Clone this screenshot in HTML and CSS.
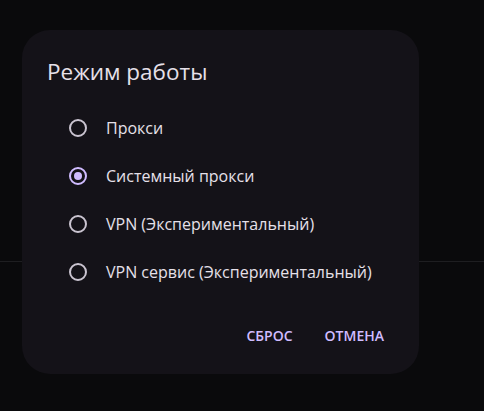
FILE: index.html
```html
<!DOCTYPE html>
<html lang="ru">
<head>
    <meta charset="UTF-8">
    <title>Режим работы</title>
    <link rel="stylesheet" href="styles.css">
</head>
<body>
    <div class="page">
        <div class="divider"></div>
    </div>

    <div class="dialog">
        <h2 class="dialog-title">Режим работы</h2>

        <div class="options">
            <label class="option">
                <span class="radio"></span>
                <span class="option-text">Прокси</span>
            </label>
            <label class="option">
                <span class="radio checked"></span>
                <span class="option-text">Системный прокси</span>
            </label>
            <label class="option">
                <span class="radio"></span>
                <span class="option-text">VPN (Экспериментальный)</span>
            </label>
            <label class="option">
                <span class="radio"></span>
                <span class="option-text">VPN сервис (Экспериментальный)</span>
            </label>
        </div>

        <div class="actions">
            <button class="text-btn">Сброс</button>
            <button class="text-btn">Отмена</button>
        </div>
    </div>
</body>
</html>
```

FILE: styles.css
```css
/* Общие стили */
body {
    font-family: 'Open Sans', 'Noto Sans', sans-serif;
    background-color: #0a0a0c;
    margin: 0;
    width: 484px;
    height: 411px;
    overflow: hidden;
    position: relative;
}

.page {
    padding-top: 261px;
}

.divider {
    height: 1px;
    background-color: #1e1e21;
}

/* Диалог */
.dialog {
    position: absolute;
    left: 22px;
    top: 30px;
    width: 397px;
    height: 344px;
    box-sizing: border-box;
    background-color: #141218;
    border-radius: 28px;
    padding: 0 23px 0 25px;
    display: flex;
    flex-direction: column;
}

.dialog-title {
    margin: 0;
    padding-top: 28px;
    font-size: 22.5px;
    font-weight: 400;
    line-height: 28px;
    color: #e6e0e9;
}

.options {
    margin-top: 18px;
    display: flex;
    flex-direction: column;
}

.option {
    display: flex;
    align-items: center;
    height: 48px;
    padding-left: 22px;
    cursor: pointer;
}

.radio {
    width: 14px;
    height: 14px;
    border: 2px solid #cac4d0;
    border-radius: 50%;
    display: flex;
    align-items: center;
    justify-content: center;
    flex-shrink: 0;
}

.radio.checked {
    border-color: #d0bcff;
}

.radio.checked::after {
    content: "";
    width: 8px;
    height: 8px;
    border-radius: 50%;
    background-color: #d0bcff;
}

.option-text {
    margin-left: 19px;
    font-size: 16px;
    color: #e6e0e9;
}

/* Кнопки */
.actions {
    margin-top: auto;
    margin-bottom: 19px;
    display: flex;
    justify-content: flex-end;
    gap: 8px;
}

.text-btn {
    height: 40px;
    padding: 0 12px;
    background: none;
    border: none;
    border-radius: 20px;
    font-family: inherit;
    font-size: 14px;
    font-weight: 600;
    text-transform: uppercase;
    color: #d0bcff;
    cursor: pointer;
}
```
